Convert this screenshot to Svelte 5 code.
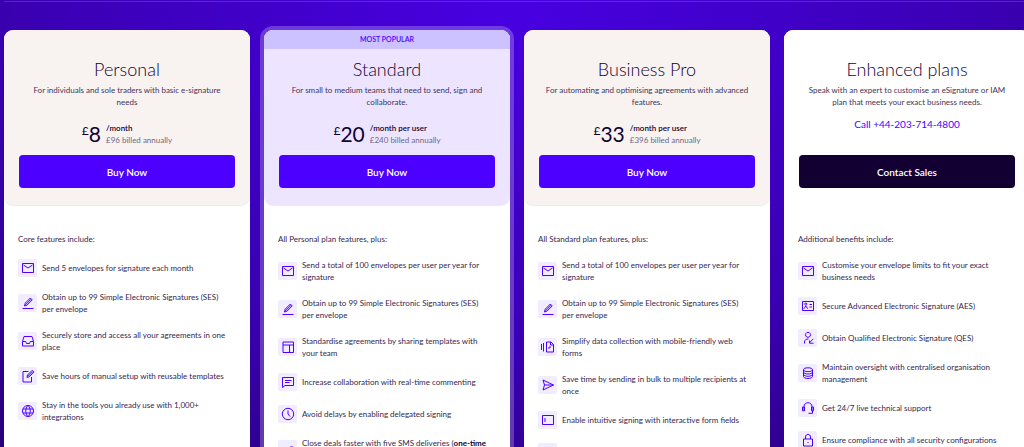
<script lang="ts">
	type Feature = {
		icon: string;
		text: string;
		strong?: string;
		rest?: string;
	};

	type Plan = {
		name: string;
		description: string;
		badge?: string;
		price?: string;
		period?: string;
		billed?: string;
		phone?: string;
		action: string;
		heading: string;
		features: Feature[];
	};

	const plans: Plan[] = [
		{
			name: 'Personal',
			description: 'For individuals and sole traders with basic e-signature\nneeds',
			price: '8',
			period: '/month',
			billed: '£96 billed annually',
			action: 'Buy Now',
			heading: 'Core features include:',
			features: [
				{ icon: 'envelope', text: 'Send 5 envelopes for signature each month' },
				{ icon: 'sign', text: 'Obtain up to 99 Simple Electronic Signatures (SES)\nper envelope' },
				{ icon: 'inbox', text: 'Securely store and access all your agreements in one\nplace' },
				{ icon: 'edit', text: 'Save hours of manual setup with reusable templates' },
				{ icon: 'globe', text: 'Stay in the tools you already use with 1,000+\nintegrations' }
			]
		},
		{
			name: 'Standard',
			description: 'For small to medium teams that need to send, sign and\ncollaborate.',
			badge: 'MOST POPULAR',
			price: '20',
			period: '/month per user',
			billed: '£240 billed annually',
			action: 'Buy Now',
			heading: 'All Personal plan features, plus:',
			features: [
				{ icon: 'envelope', text: 'Send a total of 100 envelopes per user per year for\nsignature' },
				{ icon: 'sign', text: 'Obtain up to 99 Simple Electronic Signatures (SES)\nper envelope' },
				{ icon: 'template', text: 'Standardise agreements by sharing templates with\nyour team' },
				{ icon: 'comment', text: 'Increase collaboration with real-time commenting' },
				{ icon: 'clock', text: 'Avoid delays by enabling delegated signing' },
				{
					icon: 'sms',
					text: 'Close deals faster with five SMS deliveries (',
					strong: 'one-time',
					rest: 'offer)'
				}
			]
		},
		{
			name: 'Business Pro',
			description: 'For automating and optimising agreements with advanced\nfeatures.',
			price: '33',
			period: '/month per user',
			billed: '£396 billed annually',
			action: 'Buy Now',
			heading: 'All Standard plan features, plus:',
			features: [
				{ icon: 'envelope', text: 'Send a total of 100 envelopes per user per year for\nsignature' },
				{ icon: 'sign', text: 'Obtain up to 99 Simple Electronic Signatures (SES)\nper envelope' },
				{ icon: 'forms', text: 'Simplify data collection with mobile-friendly web\nforms' },
				{ icon: 'send', text: 'Save time by sending in bulk to multiple recipients at\nonce' },
				{ icon: 'field', text: 'Enable intuitive signing with interactive form fields' },
				{ icon: 'attachment', text: '' }
			]
		},
		{
			name: 'Enhanced plans',
			description: 'Speak with an expert to customise an eSignature or IAM\nplan that meets your exact business needs.',
			phone: '+44-203-714-4800',
			action: 'Contact Sales',
			heading: 'Additional benefits include:',
			features: [
				{ icon: 'envelope', text: 'Customise your envelope limits to fit your exact\nbusiness needs' },
				{ icon: 'id', text: 'Secure Advanced Electronic Signature (AES)' },
				{ icon: 'person', text: 'Obtain Qualified Electronic Signature (QES)' },
				{ icon: 'database', text: 'Maintain oversight with centralised organisation\nmanagement' },
				{ icon: 'headset', text: 'Get 24/7 live technical support' },
				{ icon: 'lock', text: 'Ensure compliance with all security configurations' }
			]
		}
	];

	// Outlines on a 14 x 14 grid
	const icons: Record<string, string> = {
		envelope: 'M1.5 2.5h11v9h-11z M2.5 4l4.500 3 4.500-3',
		sign: 'M1.5 12.5h11 M3.500 10l.7-2.800L9.300 2l1.900 1.900-5.100 5.200z M4.500 8.800L10 3.200',
		inbox: 'M3 2.5h8l1.500 5v4.500h-11V7.500z M1.500 7.500h3.200l.8 2h3l.8-2h3.200',
		edit: 'M7.500 2.500H2v10.500h8.500V8 M6 8.500l.5-2.500L11.200 1.300l1.700 1.700L8.200 7.800z M7 7.300l4.800-4.800',
		globe: 'M7 1.500a5.500 5.500 0 1 0 0 11a5.500 5.500 0 1 0 0-11z M7 1.500c-3 3-3 8 0 11c3-3 3-8 0-11z M2 5h10 M2 9h10',
		template: 'M2 2h10.500v10.500H2z M2 5h10.500 M8.500 5v7.500',
		comment: 'M1.500 2.500h11v8H4l-2.500 2z M4 5.500h6.500 M4 7.500h4.500',
		clock: 'M7 1.300a5.700 5.700 0 1 0 0 11.400a5.700 5.700 0 1 0 0-11.400z M7 3.500V7l2 2.500',
		sms: 'M2 6.500h7V5h3v7H2z M9 5.500h3',
		forms: 'M.5 4v6 M2.500 3v8.500 M5.500 2h4.500l2.500 2.500V12h-7z M9.500 2v3h3 M8 9V7h2',
		send: 'M2 2l10.500 5L2 12l1.500-5z M3.500 7h9',
		field: 'M1.500 2.500h11v9h-11z M4 5v4',
		attachment: 'M2 4.500h10v7H2z',
		id: 'M1.500 2.500h11v9h-11z M4.800 4.200a1 1 0 1 0 .01 0z M2.800 9.800l2-2.800 2 2.800 M8.500 5.500h2.500 M8.500 8h2.500',
		person: 'M7 1.300a2.500 2.500 0 1 0 .01 0z M3.500 12.500V11c0-2 1.700-3.300 4-3 M12.300 7.800L8.300 11.800 M8.500 9.500v2.700h4',
		database: 'M7 1.800c-2.800 0-4.500.8-4.500 1.900S4.200 5.600 7 5.600s4.500-.8 4.500-1.900S9.800 1.800 7 1.800z M2.500 3.700v6.800c0 1 2 2 4.500 2s4.500-1 4.500-2V3.700 M2.500 6c0 1 2 2 4.500 2s4.500-1 4.500-2 M2.500 8.300c0 1 2 2 4.500 2s4.500-1 4.500-2',
		headset: 'M3 9.500V5.800c0-5.500 8-5.500 8 0v3.700 M3.500 6h-2v3.800h2z M10.500 6h2v3.800h-2z M11.500 9.800v2.500H7.500',
		lock: 'M2.500 6h9v7h-9z M4.500 6V4c0-3.500 5-3.500 5 0v2 M7 9v1'
	};
</script>

<main class="pricing">
	<hr class="divider" />

	<div class="plans">
		{#each plans as plan}
			<article class="card" class:popular={plan.badge} class:enhanced={plan.phone}>
				<header class="card-head">
					{#if plan.badge}
						<div class="badge">{plan.badge}</div>
					{/if}
					<div class="card-intro">
						<h2>{plan.name}</h2>
						<p class="description">{plan.description}</p>
						<div class="cost">
							{#if plan.phone}
								<a class="phone" href="tel:{plan.phone}">Call {plan.phone}</a>
							{:else}
								<div class="price">
									<span class="currency">£</span><span class="amount">{plan.price}</span>
									<div class="terms">
										<div class="period">{plan.period}</div>
										<div class="billed">{plan.billed}</div>
									</div>
								</div>
							{/if}
						</div>
						<button type="button">{plan.action}</button>
					</div>
				</header>

				<section class="card-body">
					<h3>{plan.heading}</h3>
					<ul>
						{#each plan.features as feature}
							<li>
								<span class="icon">
									<svg viewBox="0 0 14 14" aria-hidden="true">
										<path d={icons[feature.icon]} />
									</svg>
								</span>
								<span class="label">{feature.text}{#if feature.strong}<strong>{feature.strong}</strong><br />{feature.rest}{/if}</span>
							</li>
						{/each}
					</ul>
				</section>
			</article>
		{/each}
	</div>
</main>

<style>
	:global(body) {
		margin: 0;
	}

	.pricing {
		box-sizing: border-box;
		height: 100vh;
		overflow: hidden;
		font-family: Lato, 'Liberation Sans', sans-serif;
		color: #130032;
		background: radial-gradient(ellipse 80% 130% at 50% 0, #4800e2 0%, #3a00b2 60%, #28007a 100%);
	}

	.divider {
		height: 1px;
		margin: 1px 0 28px 4px;
		border: 0;
		background: rgba(255, 255, 255, 0.15);
	}

	/* The last card runs a little past the right edge */
	.plans {
		display: grid;
		grid-template-columns: repeat(4, 1fr);
		gap: 14px;
		margin: 0 -6px 0 4px;
	}

	.card {
		min-height: 100vh;
		border-radius: 9px;
		background: #fff;
	}

	.popular {
		box-shadow: 0 0 0 4px rgba(255, 255, 255, 0.23);
	}

	.card-head {
		overflow: hidden;
		border-radius: 9px;
		background: #f8f3f0;
		box-shadow: 0 1px 1px rgba(19, 0, 50, 0.08);
		text-align: center;
	}

	.popular .card-head {
		background: #ede5ff;
	}

	.enhanced .card-head {
		background: #fff;
		box-shadow: none;
	}

	.badge {
		height: 19px;
		font-size: 7px;
		line-height: 19px;
		font-weight: 600;
		color: #4c00ff;
		background: #cbc2ff;
	}

	.card-intro {
		padding: 27px 15px 17px;
	}

	.popular .card-intro {
		padding-top: 8px;
	}

	h2 {
		margin: 0 0 3px;
		font-size: 18px;
		line-height: 24px;
		font-weight: 300;
	}

	.description {
		margin: 0 -10px;
		font-size: 8px;
		line-height: 12px;
		white-space: pre-line;
		color: #42335b;
	}

	.cost {
		display: flex;
		justify-content: center;
		height: 47px;
	}

	.price {
		display: flex;
		padding-top: 14px;
	}

	.currency {
		font-size: 12px;
		line-height: 18px;
	}

	.amount {
		margin-right: 5px;
		font-size: 21px;
		line-height: 24px;
	}

	.terms {
		font-size: 8px;
		line-height: 12px;
		text-align: left;
	}

	.period {
		font-weight: 600;
	}

	.billed {
		color: #716684;
	}

	.phone {
		padding-top: 10px;
		font-size: 10px;
		line-height: 12px;
		color: #4c00ff;
		text-decoration: none;
	}

	button {
		display: block;
		width: 100%;
		height: 33px;
		padding: 0;
		border: 0;
		border-radius: 4px;
		font: inherit;
		font-size: 10px;
		font-weight: 600;
		color: #fff;
		background: #4c00ff;
		cursor: pointer;
	}

	.enhanced button {
		background: #130032;
	}

	.card-body {
		padding: 28px 14px;
		font-size: 8px;
		line-height: 12px;
		color: #36264f;
	}

	h3 {
		margin: 0 0 14px;
		font-size: 8px;
		font-weight: 400;
	}

	ul {
		display: flex;
		flex-direction: column;
		gap: 14px;
		margin: 0;
		padding: 0;
		list-style: none;
	}

	li {
		display: flex;
		align-items: center;
		gap: 5px;
	}

	.icon {
		display: flex;
		flex: none;
		align-items: center;
		justify-content: center;
		width: 19px;
		height: 18px;
		border-radius: 2px;
		background: #f1ecff;
	}

	svg {
		width: 14px;
		height: 14px;
		fill: none;
		stroke: #4c00ff;
		stroke-width: 1;
	}

	.label {
		white-space: pre;
	}

	strong {
		font-weight: 700;
		color: #130032;
	}
</style>
